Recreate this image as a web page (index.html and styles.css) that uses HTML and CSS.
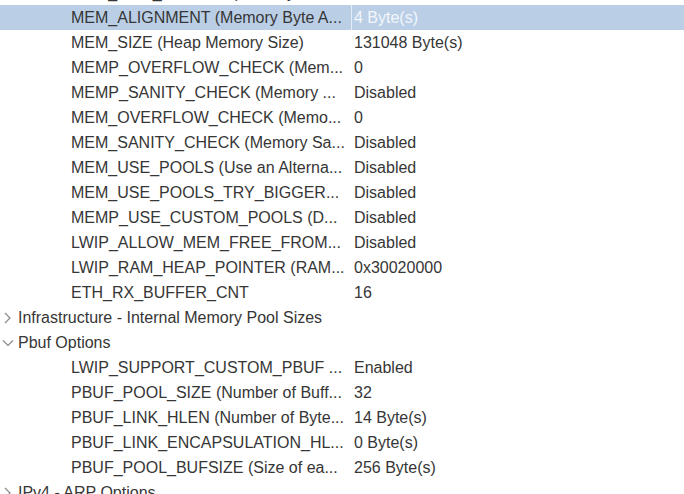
FILE: index.html
```html
<!DOCTYPE html>
<html>
<head>
<meta charset="utf-8">
<link rel="stylesheet" href="styles.css">
</head>
<body>
<div class="view">
  <div class="tree">
    <div class="row"><div class="name">MEM_LIBC_MALLOC (Memory ...</div><div class="val">Disabled</div></div>
    <div class="row sel"><div class="name">MEM_ALIGNMENT (Memory Byte A...</div><div class="val">4 Byte(s)</div></div>
    <div class="row"><div class="name">MEM_SIZE (Heap Memory Size)</div><div class="val">131048 Byte(s)</div></div>
    <div class="row"><div class="name">MEMP_OVERFLOW_CHECK (Mem...</div><div class="val">0</div></div>
    <div class="row"><div class="name">MEMP_SANITY_CHECK (Memory ...</div><div class="val">Disabled</div></div>
    <div class="row"><div class="name">MEM_OVERFLOW_CHECK (Memo...</div><div class="val">0</div></div>
    <div class="row"><div class="name">MEM_SANITY_CHECK (Memory Sa...</div><div class="val">Disabled</div></div>
    <div class="row"><div class="name">MEM_USE_POOLS (Use an Alterna...</div><div class="val">Disabled</div></div>
    <div class="row"><div class="name">MEM_USE_POOLS_TRY_BIGGER...</div><div class="val">Disabled</div></div>
    <div class="row"><div class="name">MEMP_USE_CUSTOM_POOLS (D...</div><div class="val">Disabled</div></div>
    <div class="row"><div class="name">LWIP_ALLOW_MEM_FREE_FROM...</div><div class="val">Disabled</div></div>
    <div class="row"><div class="name">LWIP_RAM_HEAP_POINTER (RAM...</div><div class="val">0x30020000</div></div>
    <div class="row"><div class="name">ETH_RX_BUFFER_CNT</div><div class="val">16</div></div>
    <div class="group"><svg class="chev" width="10" height="12" viewBox="0 0 10 12"><polyline points="2,1 7,6 2,11" fill="none" stroke="#8a8a8a" stroke-width="1.2"/></svg><span>Infrastructure - Internal Memory Pool Sizes</span></div>
    <div class="group"><svg class="chev" width="12" height="10" viewBox="0 0 12 10"><polyline points="1,2.5 6,7.5 11,2.5" fill="none" stroke="#8a8a8a" stroke-width="1.2"/></svg><span>Pbuf Options</span></div>
    <div class="row"><div class="name">LWIP_SUPPORT_CUSTOM_PBUF ...</div><div class="val">Enabled</div></div>
    <div class="row"><div class="name">PBUF_POOL_SIZE (Number of Buff...</div><div class="val">32</div></div>
    <div class="row"><div class="name">PBUF_LINK_HLEN (Number of Byte...</div><div class="val">14 Byte(s)</div></div>
    <div class="row"><div class="name">PBUF_LINK_ENCAPSULATION_HL...</div><div class="val">0 Byte(s)</div></div>
    <div class="row"><div class="name">PBUF_POOL_BUFSIZE (Size of ea...</div><div class="val">256 Byte(s)</div></div>
    <div class="group"><svg class="chev" width="10" height="12" viewBox="0 0 10 12"><polyline points="2,1 7,6 2,11" fill="none" stroke="#8a8a8a" stroke-width="1.2"/></svg><span>IPv4 - ARP Options</span></div>
  </div>
</div>
</body>
</html>
```

FILE: styles.css
```css
html, body {
  margin: 0;
  padding: 0;
  background: #ffffff;
}
.view {
  width: 684px;
  height: 494px;
  overflow: hidden;
  font-family: "Liberation Sans", Arial, sans-serif;
  font-size: 16px;
  color: #363636;
}
.tree {
  margin-top: -20px;
  display: flex;
  flex-direction: column;
}
.row {
  display: grid;
  grid-template-columns: 351px 1fr;
  height: 25px;
  line-height: 25px;
}
.name {
  padding-left: 71px;
  white-space: nowrap;
  overflow: hidden;
}
.val {
  padding-left: 2px;
  border-left: 1px solid transparent;
  white-space: nowrap;
}
.sel {
  background: #bacfe6;
}
.sel .val {
  color: #f2f6fb;
  border-left-color: #e4ecf6;
}
.group {
  display: flex;
  align-items: center;
  height: 25px;
  line-height: 25px;
  white-space: nowrap;
}
.chev {
  width: 12px;
  margin-left: 2px;
  margin-right: 4px;
  display: block;
}
```
